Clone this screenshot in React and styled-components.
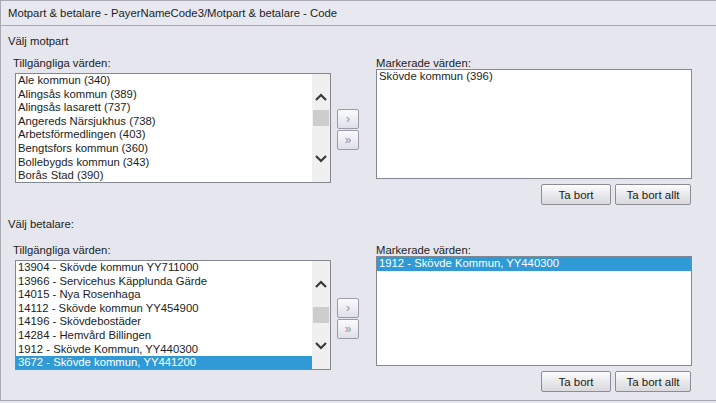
import styled, { createGlobalStyle } from "styled-components"

const GlobalStyle = createGlobalStyle`
  html, body { margin: 0; padding: 0; background: #e5e6ee; }
  body { font-family: "Liberation Sans", Arial, sans-serif; font-size: 11.3px; color: #1c1c1c; }
`

const Window = styled.div`
  width: 716px;
  height: 401px;
  box-sizing: border-box;
  border-top: 1px solid #a9a9b2;
  border-left: 1px solid #a9a9b2;
  border-bottom: 1px solid #a9a9b2;
  background: #e5e6ee;
  overflow: hidden;
`

const TitleBar = styled.div`
  height: 24px;
  line-height: 24px;
  padding-left: 7px;
  border-bottom: 1px solid #a9a9b2;
  background: #e8e9f0;
`

const Section = styled.div`
  padding-left: 7px;
`

const Heading = styled.div`
  height: 14px;
  line-height: 14px;
  padding-top: ${p => p.top}px;
`

const Row = styled.div`
  display: flex;
  align-items: flex-start;
  margin-top: ${p => p.gap}px;
`

const LeftPanel = styled.div`
  width: 323px;
  padding-left: 5px;
  box-sizing: border-box;
`

const Label = styled.div`
  height: 12px;
  line-height: 12px;
`

const ListBox = styled.div`
  display: flex;
  width: ${p => p.w}px;
  height: ${p => p.h}px;
  margin-top: ${p => p.mt}px;
  margin-left: ${p => p.ml || 0}px;
  border: 1px solid #828790;
  background: #fff;
  box-sizing: border-box;
`

const Items = styled.div`
  flex: 1;
  overflow: hidden;
`

const Item = styled.div`
  height: 13.6px;
  line-height: 13.6px;
  padding-left: 2px;
  white-space: nowrap;
  background: ${p => (p.selected ? "#2f9ad6" : "transparent")};
  color: ${p => (p.selected ? "#fff" : "#1c1c1c")};
`

const ScrollBar = styled.div`
  width: 18px;
  background: #f0f0f0;
  display: flex;
  flex-direction: column;
  align-items: center;
  padding: 19px 0 19px;
  box-sizing: border-box;
`

const Track = styled.div`
  flex: 1;
  width: 100%;
  padding-top: ${p => p.offset}px;
  box-sizing: border-box;
`

const Thumb = styled.div`
  height: 16px;
  margin: 0 1px;
  background: #cdcdcd;
`

const MoveColumn = styled.div`
  display: flex;
  flex-direction: column;
  gap: 1px;
  margin-left: 6px;
  margin-top: ${p => p.mt}px;
`

const MoveButton = styled.div`
  width: 20px;
  height: 18px;
  border: 1px solid #9a9aa8;
  border-radius: 2px;
  background: linear-gradient(#fbfbfd, #dfe0e8);
  display: flex;
  align-items: center;
  justify-content: center;
  color: #8e8fa0;
  font-size: 12px;
`

const RightPanel = styled.div`
  margin-left: 17px;
  width: 315px;
`

const ButtonRow = styled.div`
  display: flex;
  justify-content: flex-end;
  gap: 4px;
  margin-top: 5px;
`

const Button = styled.button`
  height: 21px;
  width: ${p => p.w}px;
  padding: 0;
  border: 1px solid #8c8c94;
  border-radius: 2px;
  background: linear-gradient(#fdfdfd, #e9e9ec 50%, #dadade);
  font-family: "Liberation Sans", Arial, sans-serif;
  font-size: 11.5px;
  color: #1c1c1c;
`

const Chevron = ({ down }) => (
  <svg width="14" height="9" viewBox="0 0 14 9">
    <path
      d={down ? "M2 2 L7 7 L12 2" : "M2 7 L7 2 L12 7"}
      fill="none"
      stroke="#3a3a3a"
      strokeWidth="2.2"
    />
  </svg>
)

const List = ({ items, selected, w, h, mt, ml, scroll, offset }) => (
  <ListBox w={w} h={h} mt={mt} ml={ml}>
    <Items>
      {items.map(t => (
        <Item key={t} selected={t === selected}>{t}</Item>
      ))}
    </Items>
    {scroll && (
      <ScrollBar>
        <Chevron />
        <Track offset={offset}>
          <Thumb />
        </Track>
        <Chevron down />
      </ScrollBar>
    )}
  </ListBox>
)

const motpartItems = [
  "Ale kommun (340)",
  "Alingsås kommun (389)",
  "Alingsås lasarett (737)",
  "Angereds Närsjukhus (738)",
  "Arbetsförmedlingen (403)",
  "Bengtsfors kommun (360)",
  "Bollebygds kommun (343)",
  "Borås Stad (390)",
]

const betalareItems = [
  "13904 - Skövde kommun YY711000",
  "13966 - Servicehus Käpplunda Gärde",
  "14015 - Nya Rosenhaga",
  "14112 - Skövde kommun YY454900",
  "14196 - Skövdebostäder",
  "14284 - Hemvård Billingen",
  "1912 - Skövde Kommun, YY440300",
  "3672 - Skövde kommun, YY441200",
]

const Picker = ({ items, selected, marked, markedSelected, offset, gap, moveTop, leftGap, rightGap }) => (
  <Row gap={gap}>
    <LeftPanel>
      <Label>Tillgängliga värden:</Label>
      <List items={items} selected={selected} w={316} h={110} mt={leftGap} ml={2} scroll offset={offset} />
    </LeftPanel>
    <MoveColumn mt={moveTop}>
      <MoveButton>›</MoveButton>
      <MoveButton>»</MoveButton>
    </MoveColumn>
    <RightPanel>
      <Label>Markerade värden:</Label>
      <List items={marked} selected={markedSelected} w={316} h={110} mt={rightGap} />
      <ButtonRow>
        <Button w={70}>Ta bort</Button>
        <Button w={76}>Ta bort allt</Button>
      </ButtonRow>
    </RightPanel>
  </Row>
)

export default function App() {
  return (
    <>
      <GlobalStyle />
      <Window>
        <TitleBar>Motpart &amp; betalare - PayerNameCode3/Motpart &amp; betalare - Code</TitleBar>
        <Section>
          <Heading top={8}>Välj motpart</Heading>
          <Picker
            items={motpartItems}
            marked={["Skövde kommun (396)"]}
            offset={8}
            gap={9}
            moveTop={52}
            leftGap={4}
            rightGap={0}
          />
          <Heading top={12}>Välj betalare:</Heading>
          <Picker
            items={betalareItems}
            selected="3672 - Skövde kommun, YY441200"
            marked={["1912 - Skövde Kommun, YY440300"]}
            markedSelected="1912 - Skövde Kommun, YY440300"
            offset={18}
            gap={13}
            moveTop={54}
            leftGap={4}
            rightGap={0}
          />
        </Section>
      </Window>
    </>
  )
}
